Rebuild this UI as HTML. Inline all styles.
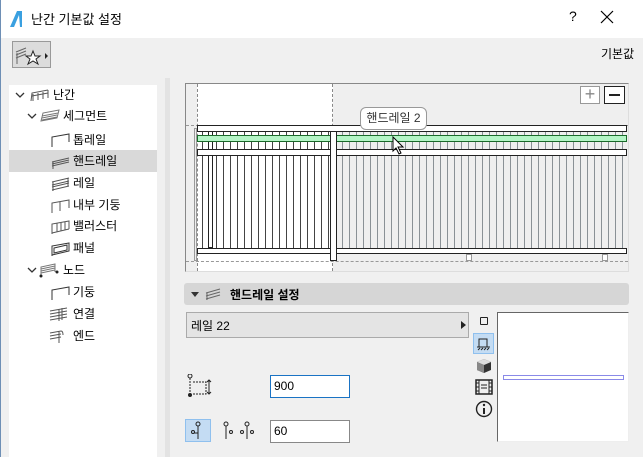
<!DOCTYPE html>
<html><head><meta charset="utf-8"><style>
*{margin:0;padding:0;box-sizing:border-box}
body{width:643px;height:457px;background:#f0f0f0;font-family:"Liberation Sans","Noto Sans CJK KR",sans-serif;font-size:12px;color:#000;position:relative;overflow:hidden}
.a{position:absolute}
.tree div{position:absolute;height:22px;line-height:22px;font-size:12px}
.tree svg{position:absolute}
</style></head><body>
<div class="a" style="left:0;top:0;width:643px;height:38px;background:#fff"></div>
<div class="a" style="left:0;top:0;width:1px;height:457px;background:#6e8fb5"></div>
<svg class="a" style="left:8px;top:10px" width="16" height="18"><path d="M2 17 L9 1 L14 1 L14 17 Z" fill="#3aa0e0"/><path d="M6 17 L11 5 L12 17Z" fill="#fff"/></svg>
<div class="a" style="left:31px;top:9px;font-size:13px">난간 기본값 설정</div>
<div class="a" style="left:569px;top:8px;font-size:14px">?</div>
<svg class="a" style="left:600px;top:10px" width="14" height="14"><path d="M1 1 L13 13 M13 1 L1 13" stroke="#000" stroke-width="1.2"/></svg>
<div class="a" style="left:12px;top:41px;width:39px;height:27px;background:#dcdcdc;border:1px solid #999"></div>
<svg class="a" style="left:14px;top:44px" width="36" height="24"><path d="M2 8 L12 4 M2 11 L12 7 M2 14 L12 10 M3 9 V20" stroke="#666" fill="none"/><path d="M19 7 L21 12 L26 12 L22 15 L24 20 L19 17 L14 20 L16 15 L12 12 L17 12Z" stroke="#222" fill="#fff"/><path d="M31 9 L34 12 L31 15Z" fill="#222"/></svg>
<div class="a" style="left:601px;top:45px;font-size:12px">기본값</div>
<div class="a" style="left:9px;top:85px;width:148px;height:372px;background:#fff"></div>
<div class="a" style="left:165px;top:78px;width:5px;height:379px;background:#e3e3e3"></div>
<div class="a" style="left:9px;top:150px;width:148px;height:22px;background:#d9d9d9"></div>
<div class="tree">
<svg style="left:15px;top:92px" width="10" height="6"><path d="M1 1 L5 5 L9 1" stroke="#333" fill="none" stroke-width="1.3"/></svg>
<svg style="left:30px;top:88px" width="20" height="14"><path d="M1 13 L2 5 L18 2 M3 6 V13 M8 5 V12 M13 4 V11 M18 2 V10 M2 8 L18 5" stroke="#555" fill="none"/></svg>
<div style="left:53px;top:84px">난간</div>
<svg style="left:27px;top:113px" width="10" height="6"><path d="M1 1 L5 5 L9 1" stroke="#333" fill="none" stroke-width="1.3"/></svg>
<svg style="left:40px;top:108px" width="20" height="14"><path d="M1 13 L3 5 L19 2 L17 10 Z M2 8 L18 5 M2 10 L17 7 M2 12 L17 9" stroke="#777" fill="none"/></svg>
<div style="left:63px;top:105px">세그먼트</div>
<svg style="left:51px;top:132px" width="20" height="16"><path d="M1 15 V5 L18 2 V10" stroke="#333" fill="none"/></svg><div style="left:73px;top:129px">톱레일</div>
<svg style="left:51px;top:154px" width="20" height="16"><path d="M1 8 L18 4 M1 10 L18 6 M1 12 L18 8 M2 8 V15" stroke="#555" fill="none"/></svg><div style="left:73px;top:150px">핸드레일</div>
<svg style="left:51px;top:176px" width="20" height="16"><path d="M1 6 L18 2 M1 9 L18 5 M1 11 L18 7 M1 14 L18 10 M2 6 V15 M17 2 V10" stroke="#555" fill="none"/></svg><div style="left:73px;top:172px">레일</div>
<svg style="left:51px;top:198px" width="20" height="16"><path d="M1 15 V5 L18 2 V10 M9 4 V13" stroke="#555" fill="none"/></svg><div style="left:73px;top:194px">내부 기둥</div>
<svg style="left:51px;top:219px" width="20" height="16"><path d="M1 15 V5 L18 2 V10 M6 4 V13 M10 3 V12 M14 3 V11 M1 14 L18 10" stroke="#555" fill="none"/></svg><div style="left:73px;top:215px">밸러스터</div>
<svg style="left:51px;top:241px" width="20" height="16"><path d="M1 15 V5 L18 2 V10 L1 14 M3 7 L16 4 V9 L3 12 Z" stroke="#333" fill="none"/></svg><div style="left:73px;top:237px">패널</div>
<svg style="left:27px;top:267px" width="10" height="6"><path d="M1 1 L5 5 L9 1" stroke="#333" fill="none" stroke-width="1.3"/></svg>
<svg style="left:39px;top:262px" width="22" height="16"><path d="M2 14 V5 L16 2 V10 M2 7 L16 4 M2 9 L16 6 M2 11 L16 8" stroke="#777" fill="none"/><circle cx="2" cy="14" r="1.5" fill="#222"/><circle cx="18" cy="10" r="1.5" fill="#222"/></svg>
<div style="left:63px;top:259px">노드</div>
<svg style="left:51px;top:285px" width="20" height="16"><path d="M1 15 V5 L18 2 V10" stroke="#333" fill="none"/></svg><div style="left:73px;top:281px">기둥</div>
<svg style="left:49px;top:306px" width="20" height="16"><path d="M1 5 L18 2 M1 8 L18 5 M1 11 L18 8 M1 14 L18 11 M10 3 V15 M13 2 V14" stroke="#555" fill="none"/></svg><div style="left:73px;top:303px">연결</div>
<svg style="left:49px;top:328px" width="20" height="16"><path d="M1 5 L12 3 M1 8 L12 6 M1 11 L12 9 M10 3 V15 M12 3 Q14 3 14 7" stroke="#555" fill="none"/></svg><div style="left:73px;top:325px">엔드</div>
</div>
<!-- preview -->
<div class="a" style="left:185px;top:83px;width:444px;height:189px;border:1px solid #888;border-right-color:#ddd;border-bottom-color:#ddd;background:#efefef"></div>
<div class="a" style="left:197px;top:84px;width:136px;height:187px;background:#fff;border-left:1px dashed #888;border-right:1px dashed #888"></div>
<div class="a" style="left:186px;top:125px;width:442px;border-top:1px dashed #999"></div>
<div class="a" style="left:186px;top:261px;width:442px;border-top:1px dashed #999"></div>
<div class="a" style="left:197px;top:131px;width:136px;height:117px;background:repeating-linear-gradient(90deg,transparent 0 5px,#444 5px 6px,transparent 6px 7px)"></div>
<div class="a" style="left:337px;top:131px;width:290px;height:117px;background:repeating-linear-gradient(90deg,transparent 0 5px,#8a9196 5px 6px,transparent 6px 7px)"></div>
<div class="a" style="left:194px;top:128px;width:3px;height:133px;border:1px solid #999"></div>
<div class="a" style="left:208px;top:131px;width:5px;height:117px;border:1px solid #222;background:#fff"></div>
<div class="a" style="left:197px;top:125px;width:430px;height:7px;border:1px solid #222;background:#fff"></div>
<div class="a" style="left:197px;top:135px;width:430px;height:7px;border:1px solid #1a6a2a;background:#b4f5c6"></div>
<div class="a" style="left:197px;top:149px;width:430px;height:7px;border:1px solid #222;background:#fff"></div>
<div class="a" style="left:197px;top:248px;width:430px;height:6px;border:1px solid #222;background:#fff"></div>
<div class="a" style="left:330px;top:131px;width:7px;height:130px;border:1px solid #222;background:#fff"></div>
<div class="a" style="left:466px;top:254px;width:6px;height:7px;border:1px solid #999;background:#fff"></div>
<div class="a" style="left:602px;top:254px;width:6px;height:7px;border:1px solid #999;background:#fff"></div>
<div class="a" style="left:580px;top:86px;width:20px;height:18px;border:1px solid #999;background:#fff;text-align:center;line-height:15px;font-size:18px;color:#888">+</div>
<div class="a" style="left:604px;top:86px;width:21px;height:18px;border:1px solid #222;background:#fff"><div class="a" style="left:4px;top:7px;width:11px;height:2px;background:#222"></div></div>
<div class="a" style="left:360px;top:107px;width:67px;height:23px;border:1px solid #999;border-radius:6px;background:#fff;text-align:center;line-height:21px;font-size:12px;color:#333">핸드레일 2</div>
<svg class="a" style="left:392px;top:136px" width="14" height="20"><path d="M1 1 L1 15 L4 12 L7 18 L9 17 L6 11 L11 11Z" fill="#fff" stroke="#000"/></svg>
<!-- settings -->
<div class="a" style="left:184px;top:283px;width:445px;height:22px;background:#d6d6d6;border-radius:3px"></div>
<svg class="a" style="left:191px;top:292px" width="8" height="5"><path d="M0 0 H8 L4 5Z" fill="#333"/></svg>
<svg class="a" style="left:205px;top:287px" width="16" height="14"><path d="M1 6 L15 2 M1 9 L15 5 M1 12 L15 8 M2 6 V13" stroke="#666" fill="none"/></svg>
<div class="a" style="left:230px;top:286px;font-weight:bold;font-size:12px">핸드레일 설정</div>
<div class="a" style="left:186px;top:312px;width:283px;height:26px;background:#e4e4e4;border:1px solid #aaa"></div>
<div class="a" style="left:191px;top:317px;font-size:12px">레일 22</div>
<svg class="a" style="left:461px;top:321px" width="5" height="8"><path d="M0 0 L5 4 L0 8Z" fill="#222"/></svg>
<div class="a" style="left:480px;top:317px;width:8px;height:8px;border:1px solid #222;border-radius:1px"></div>
<div class="a" style="left:473px;top:333px;width:21px;height:21px;background:#c4dcf3;border:1px solid #8fc0ee"></div>
<svg class="a" style="left:475px;top:335px" width="18" height="17"><path d="M4 12 V4 H12 V12 M2 12 H15" stroke="#222" fill="none"/><path d="M3 15 l2 -2 M6 15 l2 -2 M9 15 l2 -2 M12 15 l2 -2" stroke="#222"/></svg>
<svg class="a" style="left:476px;top:358px" width="16" height="16"><path d="M8 1 L15 4 L15 12 L8 15 L1 12 L1 4Z" fill="#333"/><path d="M8 1 L15 4 L8 7 L1 4Z" fill="#ddd"/><path d="M1 4 L8 7 L8 15 L1 12Z" fill="#888"/></svg>
<svg class="a" style="left:475px;top:379px" width="18" height="16"><rect x="1" y="1" width="16" height="14" fill="none" stroke="#222" stroke-width="1.5"/><path d="M4 1 V15 M14 1 V15 M6 6 H12 M6 9 H12 M1 4 H4 M1 8 H4 M1 12 H4 M14 4 H17 M14 8 H17 M14 12 H17" stroke="#222"/></svg>
<svg class="a" style="left:475px;top:400px" width="18" height="18"><circle cx="9" cy="9" r="7.5" fill="none" stroke="#222" stroke-width="1.4"/><path d="M9 8 V14" stroke="#222" stroke-width="2"/><circle cx="9" cy="5" r="1.2" fill="#222"/></svg>
<div class="a" style="left:497px;top:312px;width:132px;height:130px;background:#fff;border:1px solid #666;border-right-color:#eee;border-bottom-color:#eee"></div>
<div class="a" style="left:503px;top:375px;width:121px;height:5px;border:1px solid #8a8ae8"></div>
<svg class="a" style="left:186px;top:374px" width="26" height="24"><circle cx="4" cy="2" r="2" fill="none" stroke="#222"/><path d="M4 4 V20 M7 8 H20 V20 H7" stroke="#222" fill="none" stroke-dasharray="2 1"/><path d="M23 6 V20 M21 8 L23 6 L25 8 M21 18 L23 20 L25 18" stroke="#222" fill="none"/><circle cx="4" cy="21" r="2" fill="#222"/></svg>
<div class="a" style="left:270px;top:375px;width:80px;height:23px;background:#fff;border:1px solid #1a73c4"></div>
<div class="a" style="left:274px;top:379px;font-size:12px">900</div>
<div class="a" style="left:185px;top:419px;width:26px;height:23px;background:#c4dcf3;border:1px solid #8fc0ee"></div>
<svg class="a" style="left:188px;top:421px" width="90" height="20"><g stroke="#222" fill="none"><circle cx="10" cy="3" r="2"/><path d="M10 5 V18 M10 12 H6"/><circle cx="5" cy="11" r="1.5"/><circle cx="38" cy="3" r="2"/><path d="M38 5 V18"/><circle cx="43" cy="11" r="1.5"/><circle cx="59" cy="3" r="2"/><path d="M59 5 V18"/><circle cx="54" cy="11" r="1.5"/><circle cx="64" cy="11" r="1.5"/></g></svg>
<div class="a" style="left:270px;top:420px;width:80px;height:23px;background:#fff;border:1px solid #888"></div>
<div class="a" style="left:274px;top:424px;font-size:12px">60</div>
</body></html>
